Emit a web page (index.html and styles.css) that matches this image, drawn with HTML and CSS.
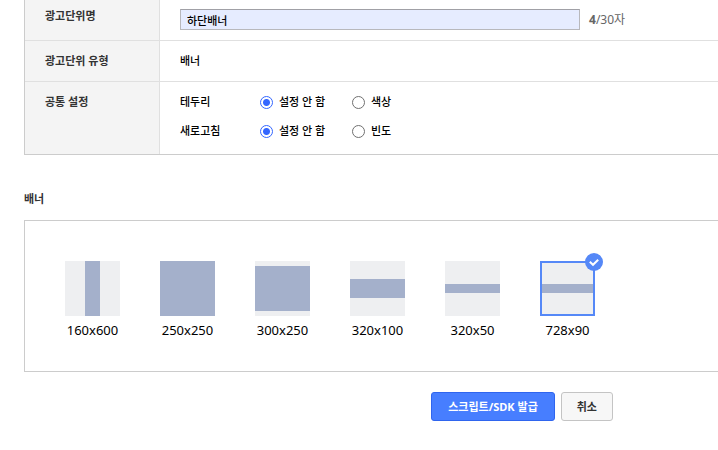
FILE: index.html
```
<!DOCTYPE html>
<html lang="ko">
<head>
<meta charset="utf-8">
<meta name="viewport" content="width=device-width, initial-scale=1">
<title>광고단위</title>
<link rel="stylesheet" href="styles.css">
</head>
<body>
<main class="page">
  <form>
    <table class="settings">
      <tbody>
        <tr>
          <th scope="row"><label for="unit-name">광고단위명</label></th>
          <td class="name-cell">
            <div class="name-field">
              <input class="name-input" id="unit-name" type="text" value="하단배너">
              <span class="counter"><strong>4</strong>/30자</span>
            </div>
          </td>
        </tr>
        <tr>
          <th scope="row">광고단위 유형</th>
          <td>배너</td>
        </tr>
        <tr>
          <th scope="row">공통 설정</th>
          <td class="options-cell">
            <div class="options" role="radiogroup" aria-labelledby="border-title">
              <span id="border-title">테두리</span>
              <label class="option"><input type="radio" name="border" checked>설정 안 함</label>
              <label class="option"><input type="radio" name="border">색상</label>
            </div>
            <div class="options" role="radiogroup" aria-labelledby="refresh-title">
              <span id="refresh-title">새로고침</span>
              <label class="option"><input type="radio" name="refresh" checked>설정 안 함</label>
              <label class="option"><input type="radio" name="refresh">빈도</label>
            </div>
          </td>
        </tr>
      </tbody>
    </table>

    <h2 class="title">배너</h2>
    <div class="sizes">
      <button type="button" class="size"><span class="thumb"><span class="shape skyscraper"></span></span>160x600</button>
      <button type="button" class="size"><span class="thumb"><span class="shape square"></span></span>250x250</button>
      <button type="button" class="size"><span class="thumb"><span class="shape rectangle"></span></span>300x250</button>
      <button type="button" class="size"><span class="thumb"><span class="shape large"></span></span>320x100</button>
      <button type="button" class="size"><span class="thumb"><span class="shape strip"></span></span>320x50</button>
      <button type="button" class="size" aria-pressed="true"><span class="thumb selected"><span class="shape strip"></span><svg class="check" viewBox="0 0 18 18" aria-hidden="true"><circle cx="9" cy="9" r="9"/><path d="M4.8 8.8 8 11.8 13.2 6.7"/></svg></span>728x90</button>
    </div>

    <div class="actions">
      <button type="submit" class="button primary">스크립트/SDK 발급</button>
      <button type="button" class="button">취소</button>
    </div>
  </form>
</main>
</body>
</html>
```
FILE: styles.css
```
* {
  box-sizing: border-box;
}

body {
  margin: 0;
  background: #fff;
  color: #000;
  font: 400 11px/18px "Noto Sans", "Noto Sans CJK KR", sans-serif;
}

button,
input {
  font: inherit;
  color: inherit;
}

/* The form continues past the right edge and under the top edge. */
.page {
  margin-top: -4px;
  padding-left: 24px;
}

.settings {
  width: 100%;
  border-collapse: separate;
  border-spacing: 0;
  border-left: 1px solid #ccc;
  border-bottom: 1px solid #ccc;
}

.settings th,
.settings td {
  padding: 11px 20px;
  font-weight: 500;
  text-align: left;
  vertical-align: top;
}

.settings th {
  width: 135px;
  background: #f4f4f4;
  border-right: 1px solid #e0e0e0;
  color: #333;
  font-weight: 700;
}

.settings tr:not(:last-child) > * {
  border-bottom: 1px solid #e0e0e0;
}

.settings .name-cell {
  padding-top: 13px;
  padding-bottom: 10px;
}

.name-field {
  display: flex;
  align-items: center;
  gap: 9px;
}

.name-input {
  width: 400px;
  height: 21px;
  padding: 0 6px;
  border: 1px solid #b8b8bc;
  border-top-color: #a0a0a6;
  border-radius: 0;
  background: #e6ecff;
}

.counter {
  color: #666;
  font-weight: 400;
  font-size: 12px;
}

.settings .options-cell {
  padding-bottom: 14px;
}

.options {
  display: grid;
  grid-template-columns: 80px 92px auto;
  justify-content: start;
}

.options + .options {
  margin-top: 11px;
}

.option {
  display: flex;
  align-items: center;
  gap: 6px;
}

.option input {
  appearance: none;
  width: 13px;
  height: 13px;
  margin: 0;
  border: 1px solid #707070;
  border-radius: 50%;
  background: #fff;
}

.option input:checked {
  border-color: #3366ff;
  background: radial-gradient(circle, #3366ff 3px, #fff 4px);
}

.title {
  margin: 35px 0 12px;
  color: #333;
  font: inherit;
  font-weight: 700;
}

.sizes {
  display: flex;
  gap: 40px;
  padding: 40px;
  border: 1px solid #ccc;
  border-right: 0;
}

.size {
  display: flex;
  flex-direction: column;
  align-items: center;
  gap: 5px;
  width: 55px;
  height: 70px;
  padding: 0;
  border: 0;
  background: none;
  font-size: 13px;
  white-space: nowrap;
}

.thumb {
  position: relative;
  display: flex;
  flex: none;
  align-items: center;
  justify-content: center;
  width: 55px;
  height: 55px;
  background: #eeeff1;
}

.thumb.selected {
  border: 2px solid #5588f7;
}

.shape {
  width: 100%;
  background: #a4b0cb;
}

.skyscraper {
  width: 15px;
  height: 55px;
}

.square {
  height: 55px;
}

.rectangle {
  height: 45px;
}

.large {
  height: 19px;
}

.strip {
  height: 9px;
}

.check {
  position: absolute;
  top: -10px;
  right: -10px;
  width: 18px;
  height: 18px;
  fill: #5588f7;
}

.check path {
  fill: none;
  stroke: #fff;
  stroke-width: 2;
}

.actions {
  display: flex;
  justify-content: flex-end;
  gap: 6px;
  padding: 20px 105px 20px 0;
}

.button {
  height: 29px;
  padding: 0 15px;
  border: 1px solid #c4c4c4;
  border-radius: 3px;
  background: #f7f7f7;
  color: #333;
  font-weight: 700;
}

.button.primary {
  padding: 0 16px;
  border-color: #2f65ee;
  background: #477eff;
  color: #fff;
}
```
